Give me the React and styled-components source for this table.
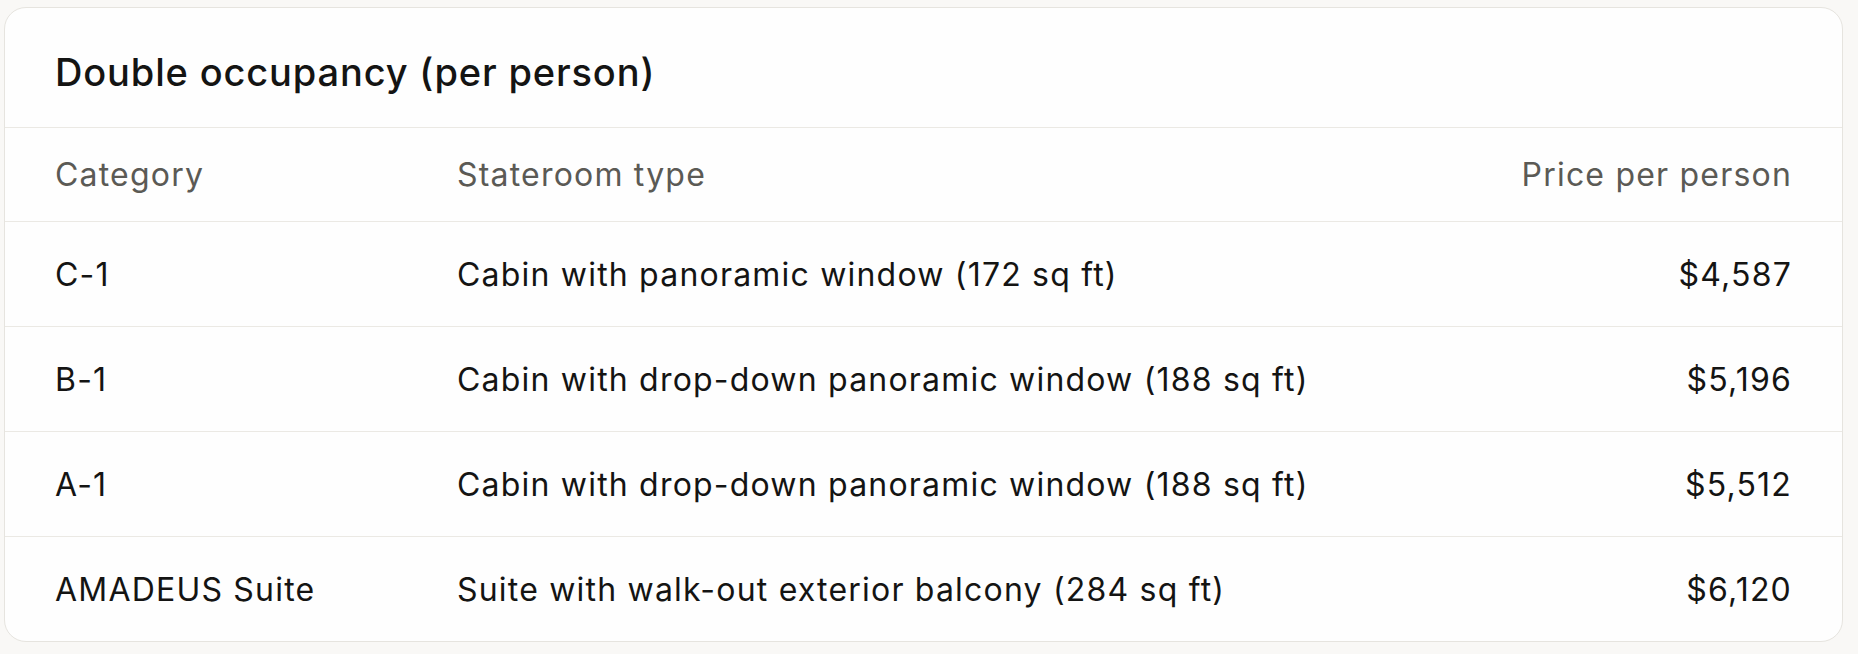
import styled, { createGlobalStyle } from 'styled-components';

const GlobalStyle = createGlobalStyle`
  html, body {
    margin: 0;
    padding: 0;
    background: #f9f8f6;
  }
  body {
    font-family: Inter, "Noto Sans", sans-serif;
    color: #141413;
  }
  *, *::before, *::after {
    box-sizing: border-box;
  }
`;

const Page = styled.div`
  padding: 7px 15px 12px 4px;
`;

const Card = styled.section`
  background: #fefefe;
  border: 1px solid #e6e4df;
  border-radius: 22px;
  overflow: hidden;
`;

const Title = styled.h2`
  margin: 0;
  height: 120px;
  display: flex;
  align-items: center;
  padding: 8px 50px 0;
  font-size: 38px;
  font-weight: 550;
  letter-spacing: 0.85px;
  border-bottom: 1px solid #ebe9e4;
`;

const Row = styled.div`
  display: grid;
  grid-template-columns: 402px 1fr auto;
  align-items: center;
  padding: 0 50px;
  height: ${p => (p.head ? '94px' : '105px')};
  font-size: 32px;
  letter-spacing: 1.2px;
  color: ${p => (p.head ? '#5b5a55' : '#141413')};
  &:not(:last-child) {
    border-bottom: 1px solid #ebe9e4;
  }
  &:last-child {
    height: 104px;
  }
`;

const Cell = styled.div`
  text-align: ${p => (p.right ? 'right' : 'left')};
  white-space: nowrap;
`;

const rows = [
  ['C-1', 'Cabin with panoramic window (172 sq ft)', '$4,587'],
  ['B-1', 'Cabin with drop-down panoramic window (188 sq ft)', '$5,196'],
  ['A-1', 'Cabin with drop-down panoramic window (188 sq ft)', '$5,512'],
  ['AMADEUS Suite', 'Suite with walk-out exterior balcony (284 sq ft)', '$6,120'],
];

export default function App() {
  return (
    <>
      <GlobalStyle />
      <Page>
        <Card>
          <Title>Double occupancy (per person)</Title>
          <Row head>
            <Cell>Category</Cell>
            <Cell>Stateroom type</Cell>
            <Cell right>Price per person</Cell>
          </Row>
          {rows.map(([cat, type, price]) => (
            <Row key={cat}>
              <Cell>{cat}</Cell>
              <Cell>{type}</Cell>
              <Cell right>{price}</Cell>
            </Row>
          ))}
        </Card>
      </Page>
    </>
  );
}
